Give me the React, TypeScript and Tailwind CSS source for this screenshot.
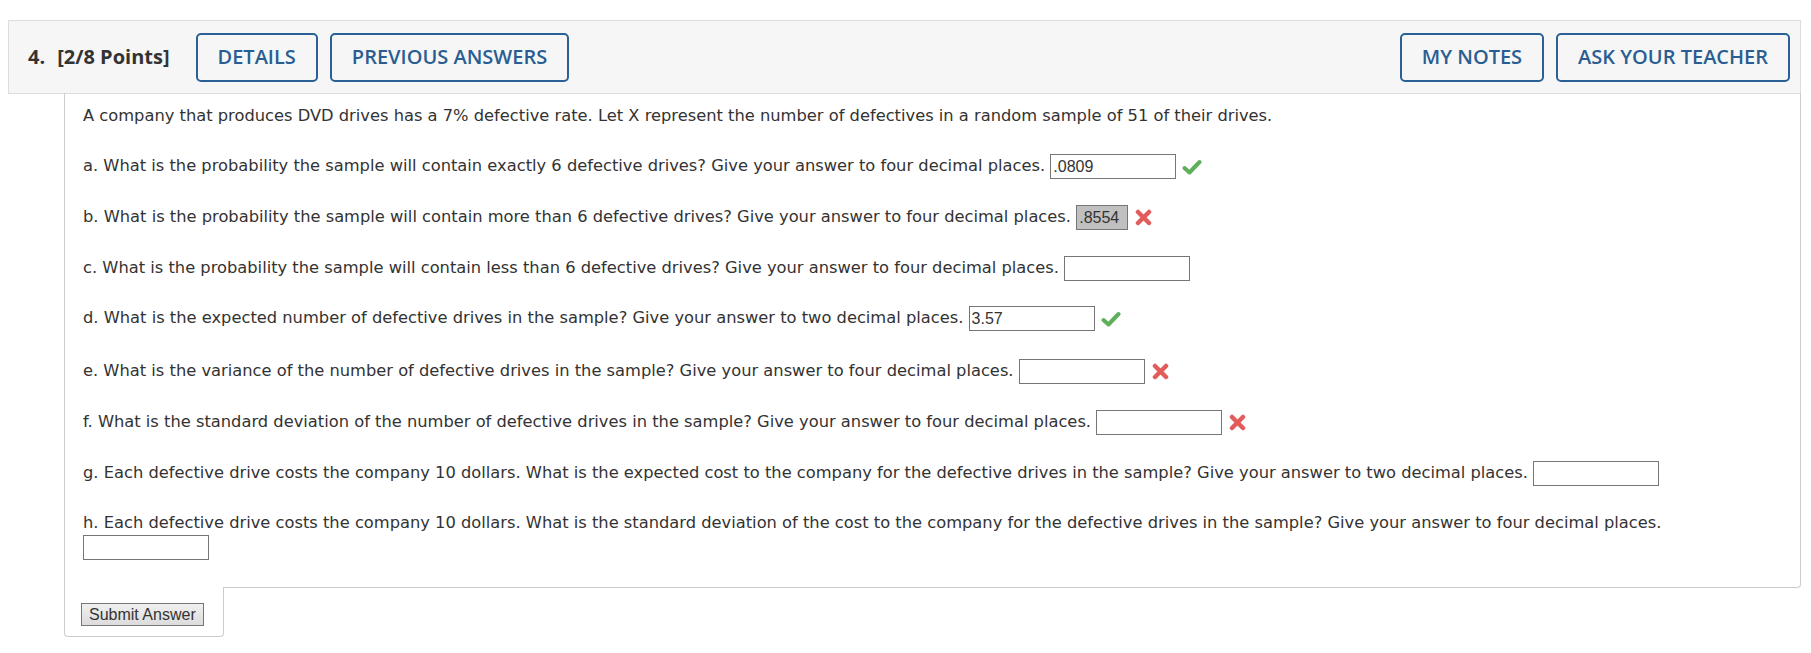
import React from 'react';

const verdana = { fontFamily: '"DejaVu Sans", Verdana, sans-serif' };

function Check() {
  return (
    <svg width="20" height="16" viewBox="0 0 20 16" className="inline-block ml-[6px] align-middle">
      <path d="M2.5 9 L7.5 13.5 L17.5 3" fill="none" stroke="#5fae5a" strokeWidth="4" strokeLinecap="round" strokeLinejoin="round" />
    </svg>
  );
}

function Cross() {
  return (
    <svg width="17" height="17" viewBox="0 0 17 17" className="inline-block ml-[7px] align-middle">
      <path d="M3 3 L14 14 M14 3 L3 14" fill="none" stroke="#e25c5c" strokeWidth="4.5" strokeLinecap="round" />
    </svg>
  );
}

function Answer({ value = '', wrong = false, w = 'w-[126px]' }: { value?: string; wrong?: boolean; w?: string }) {
  return (
    <span
      className={`inline-block h-[25px] ${w} border border-[#767676] align-middle px-[2px] text-[16px] leading-[23px] text-[#333] ${wrong ? 'bg-[#c0c0c0]' : 'bg-white'}`}
      style={{ fontFamily: '"Liberation Sans", Arial, sans-serif' }}
    >
      {value}
    </span>
  );
}

function HeaderButton({ children }: { children: React.ReactNode }) {
  return (
    <button className="h-[49px] px-[20px] border-2 border-[#2a6096] rounded-[5px] bg-[#f6f6f6] text-[#2a5e92] text-[20px] font-semibold">
      {children}
    </button>
  );
}

export default function App() {
  return (
    <div className="bg-white min-h-[653px] pt-[20px] text-[#333]">
      {/* Question header */}
      <div
        className="mx-[8px] w-[1793px] h-[74px] border border-[#dddddd] bg-[#f6f6f6] flex items-center pl-[19px] pr-[10px]"
        style={{ fontFamily: '"Open Sans", sans-serif' }}
      >
        <span className="text-[20px] font-bold text-[#333] flex gap-[12px]">
          <span>4.</span>
          <span>[2/8 Points]</span>
        </span>
        <div className="flex gap-[12px] ml-[26px]">
          <HeaderButton>DETAILS</HeaderButton>
          <HeaderButton>PREVIOUS ANSWERS</HeaderButton>
        </div>
        <div className="flex gap-[12px] ml-auto">
          <HeaderButton>MY NOTES</HeaderButton>
          <HeaderButton>ASK YOUR TEACHER</HeaderButton>
        </div>
      </div>

      {/* Question body */}
      <div
        className="ml-[64px] w-[1737px] -mt-px border-l border-r border-b border-[#cccccc] rounded-br-[4px] pl-[18px] pr-[20px] pt-[10px] pb-[27px] text-[16.3px] text-[#333]"
        style={verdana}
      >
        <p className="leading-[26px] mb-[24px]">
          A company that produces DVD drives has a 7% defective rate. Let X represent the number of defectives in a random sample of 51 of their drives.
        </p>
        <div className="flex flex-col gap-[24.8px]">
          <p className="leading-[26px]">
            a. What is the probability the sample will contain exactly 6 defective drives? Give your answer to four decimal places.{' '}
            <Answer value=".0809" />
            <Check />
          </p>
          <p className="leading-[26px]">
            b. What is the probability the sample will contain more than 6 defective drives? Give your answer to four decimal places.{' '}
            <Answer value=".8554" wrong w="w-[52px]" />
            <Cross />
          </p>
          <p className="leading-[26px]">
            c. What is the probability the sample will contain less than 6 defective drives? Give your answer to four decimal places.{' '}
            <Answer />
          </p>
          <p className="leading-[26px]">
            d. What is the expected number of defective drives in the sample? Give your answer to two decimal places.{' '}
            <Answer value="3.57" />
            <Check />
          </p>
          <p className="leading-[26px] pt-[2px]">
            e. What is the variance of the number of defective drives in the sample? Give your answer to four decimal places.{' '}
            <Answer />
            <Cross />
          </p>
          <p className="leading-[26px]">
            f. What is the standard deviation of the number of defective drives in the sample? Give your answer to four decimal places.{' '}
            <Answer />
            <Cross />
          </p>
          <p className="leading-[26px]">
            g. Each defective drive costs the company 10 dollars. What is the expected cost to the company for the defective drives in the sample? Give your answer to two decimal places.{' '}
            <Answer />
          </p>
          <p className="leading-[24px]">
            h. Each defective drive costs the company 10 dollars. What is the standard deviation of the cost to the company for the defective drives in the sample? Give your answer to four decimal places.{' '}
            <Answer />
          </p>
        </div>
      </div>

      {/* Submit tab */}
      <div className="relative ml-[64px] w-[160px] -mt-px h-[50px] border-l border-r border-b border-[#cccccc] rounded-b-[4px] bg-white pl-[16px] pt-[15px]">
        <button
          className="h-[23px] px-[7px] border border-[#767676] bg-gradient-to-b from-[#f0f0f0] to-[#dcdcdc] text-[16px] leading-[20px] text-[#333]"
          style={{ fontFamily: '"Liberation Sans", Arial, sans-serif' }}
        >
          Submit Answer
        </button>
      </div>
    </div>
  );
}
